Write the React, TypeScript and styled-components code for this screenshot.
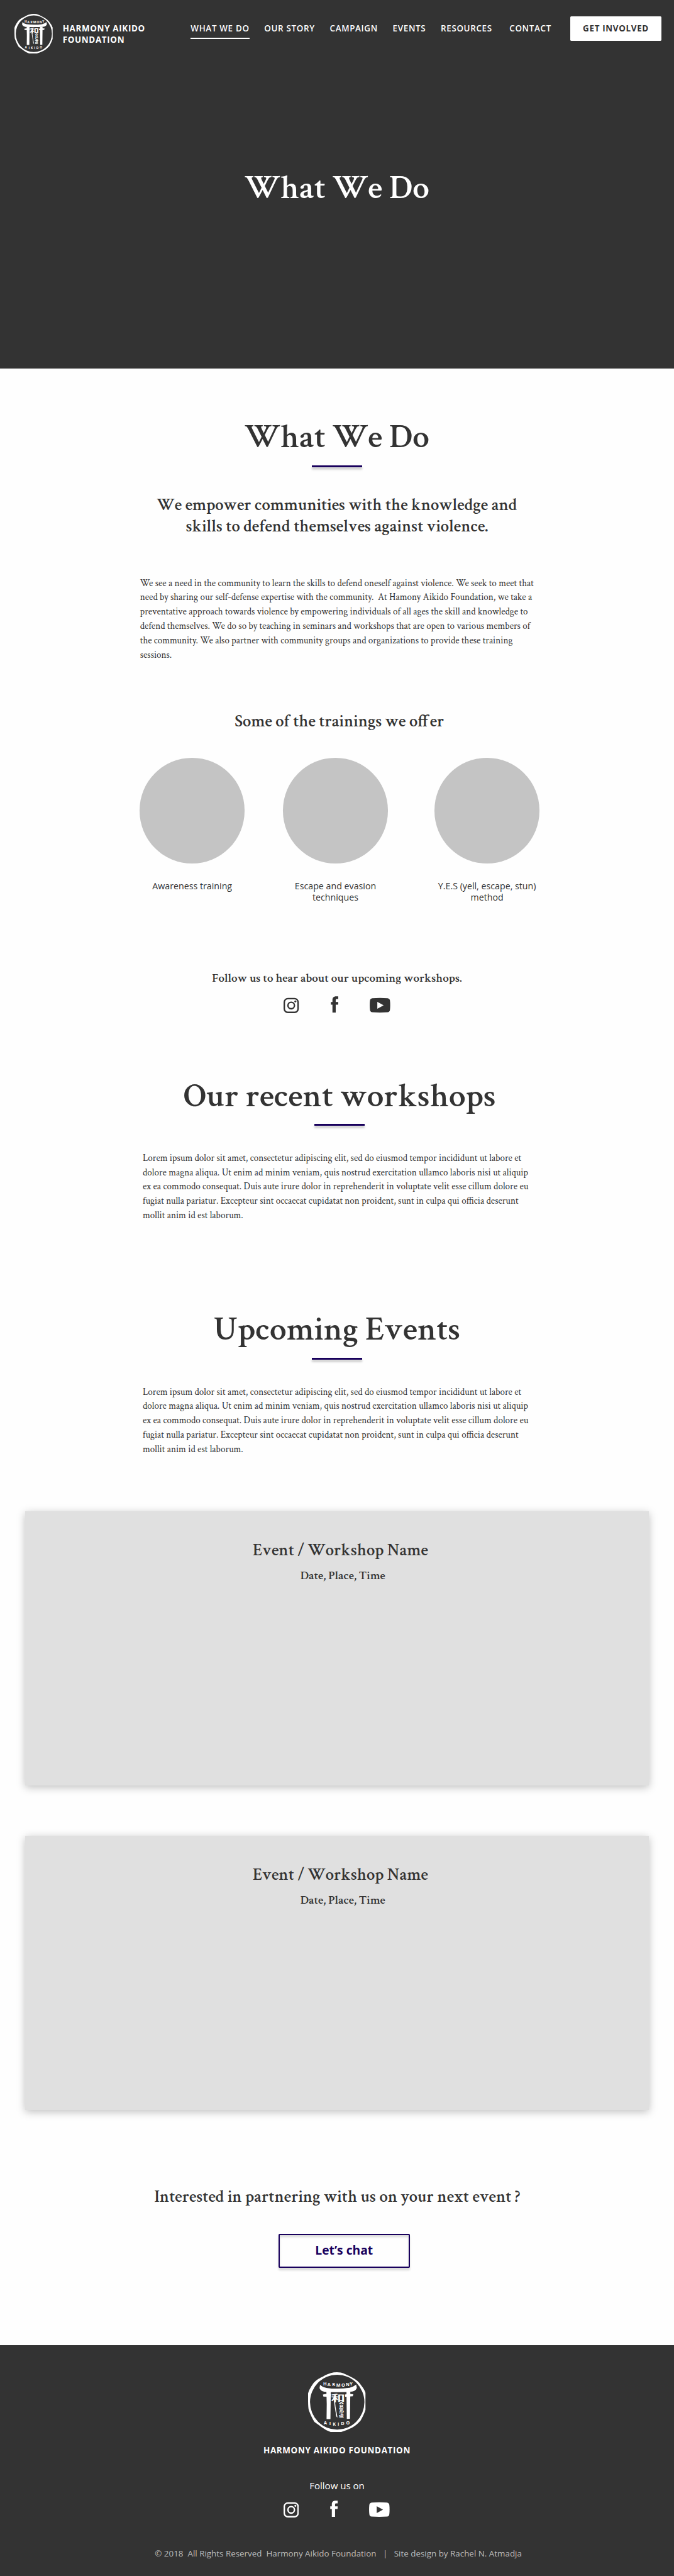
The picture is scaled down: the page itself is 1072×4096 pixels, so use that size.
import React from 'react';
import styled, { createGlobalStyle } from 'styled-components';

/* The design grid is 1280 units wide; the page is laid out at 1072px. */
const u = (n: number) => `${+(n * 0.8375).toFixed(3)}px`;

const ink = '#333333';
const navy = '#18005c';
const serif = '"Crimson Text", "Crimson Pro", "Liberation Serif", serif';
const sans = '"Open Sans", "Noto Sans", sans-serif';

const GlobalStyle = createGlobalStyle`
  *, *::before, *::after { box-sizing: border-box; }
  body { margin: 0; background: #fefefe; color: ${ink}; font-family: ${sans}; }
  h1, h2, h3, p { margin: 0; font-weight: inherit; }
`;

const Page = styled.div`
  display: flex;
  flex-direction: column;
  width: 1072px;
  height: 4096px;
  overflow: hidden;
`;

const Hero = styled.header`
  display: flex;
  flex-direction: column;
  flex: none;
  height: ${u(700)};
  background: ${ink};
  color: #fff;
`;

const TopBar = styled.div`
  display: flex;
  align-items: flex-start;
  height: ${u(120)};
  padding-left: ${u(28)};
`;

const LogoBox = styled.div<{ $w: number; $top: number }>`
  flex: none;
  width: ${(p) => u(p.$w)};
  margin-top: ${(p) => u(p.$top)};
  line-height: 0;
  svg { width: 100%; height: auto; }
`;

const Brand = styled.div`
  width: ${u(243.2)};
  margin: ${u(44.1)} 0 0 ${u(18.5)};
  font-size: ${u(16)};
  line-height: ${u(21)};
  font-weight: 700;
  letter-spacing: 0.05em;
  white-space: pre;
`;

const Nav = styled.nav`
  display: flex;
  gap: ${u(28.3)};
  margin-top: ${u(43)};
`;

const NavLink = styled.a<{ $active?: boolean }>`
  height: ${u(31)};
  border-bottom: ${u(2.4)} solid ${(p) => (p.$active ? '#fff' : 'transparent')};
  font-size: ${u(16)};
  line-height: ${u(21.8)};
  font-weight: 600;
  letter-spacing: 0.05em;
  white-space: nowrap;
  &:last-child { margin-left: ${u(4.5)}; }
`;

const InvolvedButton = styled.button`
  width: ${u(173)};
  height: ${u(47)};
  margin: ${u(31)} 0 0 ${u(36)};
  padding: 0 0 ${u(1)};
  border: 0;
  border-radius: ${u(2)};
  background: #fff;
  color: ${ink};
  font: 700 ${u(16)} / ${u(21.8)} ${sans};
  letter-spacing: 0.05em;
  white-space: nowrap;
`;

const Title = styled.h2<{ $top: number; $shift?: number }>`
  align-self: center;
  margin: ${(p) => u(p.$top)} 0 0 ${(p) => u(p.$shift ?? 0)};
  font: 600 ${u(64)} / ${u(84)} ${serif};
  font-kerning: none;
  white-space: nowrap;
`;

const Rule = styled.div<{ $shift?: number }>`
  flex: none;
  align-self: center;
  width: ${u(96)};
  height: ${u(4)};
  margin: ${u(10.7)} 0 0 ${(p) => u(p.$shift ?? 0)};
  background: ${navy};
  box-shadow: 0 ${u(4)} ${u(4)} rgba(0, 0, 0, 0.25);
`;

const Main = styled.main`
  display: flex;
  flex-direction: column;
  flex: none;
  height: ${u(3752)};
`;

const Subtitle = styled.h3<{ $top: number; $shift?: number; $size?: number; $lh?: number }>`
  align-self: center;
  margin: ${(p) => u(p.$top)} 0 0 ${(p) => u(p.$shift ?? 0)};
  font: 600 ${(p) => u(p.$size ?? 32)} / ${(p) => u(p.$lh ?? 40)} ${serif};
  font-kerning: none;
  text-align: center;
  white-space: pre;
`;

const Copy = styled.p<{ $top: number; $left: number }>`
  margin: ${(p) => u(p.$top)} 0 0 ${(p) => u(p.$left)};
  font: 400 ${u(18)} / ${u(27.2)} ${serif};
  white-space: pre;
`;

const Trainings = styled.div`
  display: flex;
  margin: ${u(49)} 0 0 ${u(265)};
  height: ${u(276)};
`;

const Training = styled.div<{ $gap: number }>`
  display: flex;
  flex-direction: column;
  align-items: center;
  gap: ${u(32.4)};
  width: ${u(200)};
  margin-left: ${(p) => u(p.$gap)};
  font-size: ${u(17)};
  line-height: ${u(21.8)};
  text-align: center;
`;

const Circle = styled.div`
  flex: none;
  width: ${u(200)};
  height: ${u(200)};
  border-radius: 50%;
  background: #c4c4c4;
`;

const SocialRow = styled.div<{ $top: number; $shift?: number }>`
  display: flex;
  align-self: center;
  align-items: flex-start;
  justify-content: space-between;
  width: ${u(202)};
  height: ${u(32)};
  margin: ${(p) => u(p.$top)} 0 0 ${(p) => u(p.$shift ?? 0)};
  svg { flex: none; }
`;

const EventCard = styled.article<{ $top: number }>`
  display: flex;
  flex-direction: column;
  flex: none;
  align-self: center;
  width: ${u(1184)};
  height: ${u(520)};
  margin-top: ${(p) => u(p.$top)};
  background: #e0e0e0;
  box-shadow: 0 ${u(4)} ${u(15)} rgba(0, 0, 0, 0.25);
`;

const ChatButton = styled.button`
  align-self: center;
  width: ${u(249)};
  height: ${u(64)};
  margin: ${u(49.4)} 0 0 ${u(27)};
  padding: 0 0 ${u(4)};
  border: ${u(2.4)} solid ${navy};
  border-radius: ${u(2)};
  background: transparent;
  box-shadow: 0 ${u(4)} ${u(4)} rgba(0, 0, 0, 0.14), inset 0 ${u(4)} ${u(4)} rgba(0, 0, 0, 0.14);
  color: ${navy};
  font: 700 ${u(23)} / ${u(30)} ${sans};
`;

const Footer = styled.footer`
  display: flex;
  flex-direction: column;
  align-items: center;
  flex: 1;
  background: ${ink};
  color: #fff;
`;

const FooterName = styled.div`
  margin-top: ${u(23.5)};
  font-size: ${u(16)};
  line-height: ${u(22)};
  font-weight: 700;
  letter-spacing: 0.05em;
`;

const FollowLabel = styled.div`
  margin-top: ${u(44.7)};
  font-size: ${u(18)};
  line-height: ${u(25)};
`;

const Copyright = styled.div`
  margin: ${u(57.4)} 0 0 ${u(5)};
  color: #bdbdbd;
  font-size: ${u(16)};
  line-height: ${u(22)};
  white-space: pre;
`;

const latin = { fontFamily: '"Open Sans", sans-serif', fontWeight: 700, fontSize: 26 };
const kanji = { fontFamily: '"Noto Sans CJK JP", sans-serif', fontWeight: 700 };

const Logo = () => (
  <svg viewBox="76 70 326 341" fill="#fff">
    <path
      fillRule="evenodd"
      d="M222 71 L240 70 L262 72 Q285 78 322 98 Q362 118 378 145 Q398 170 402 187 L402 283 Q396 305 374 345 Q350 372 325 385 Q295 400 262 410 L206 410 Q180 402 158 385 Q130 365 112 352 Q95 325 80 285 Q75 270 76 190 Q80 170 108 130 Q125 110 160 95 Q190 76 222 71 Z M241 84 A154 156 0 0 0 87 240 A154 156 0 0 0 241 396 A155 156 0 0 0 396 240 A155 156 0 0 0 241 84 Z"
    />
    <path d="M144 141 Q156 153 180 159 Q245 168 312 158 Q336 152 349 140 L353 158 Q348 175 326 180 Q245 186 168 181 Q146 176 141 160 Z" />
    <path d="M180 180 L205 180 L203 336 L181 336 L182 250 Z M294 180 L316 180 L314 334 L296 335 Z" />
    <path d="M160 197 Q184 190 208 196 L205 209 L163 208 Z M285 197 Q310 190 333 195 L330 207 L287 209 Z" />
    <path d="M226 205 Q230 270 243 326 Q235 328 233 300 Q224 250 221 212 Z" />
    <text x="162 186 213 236 265 290 313" y="144 148 150 152 151 149 145" {...latin}>HARMONY</text>
    <text x="165 197 216 244 263 292" y="368 371 372 372 371 368" {...latin}>AIKIDO</text>
    <text x="206" y="233" {...kanji} fontSize={50} textLength={80} lengthAdjust="spacingAndGlyphs">和</text>
    <text x="251 252 251" y="262 293 325" {...kanji} fontSize={28}>合気道</text>
  </svg>
);

const Socials = ({ color, hole, top, shift }: { color: string; hole: string; top: number; shift?: number }) => (
  <SocialRow $top={top} $shift={shift}>
    <svg viewBox="0 0 29 32" width={u(29)} height={u(32)} fill="none" stroke={color}>
      <rect x="1.4" y="4.6" width="26.2" height="26.2" rx="6.8" strokeWidth="2.8" />
      <circle cx="14.5" cy="17.7" r="6.2" strokeWidth="2.8" />
      <circle cx="22.4" cy="10" r="1.8" fill={color} stroke="none" />
    </svg>
    <svg viewBox="0 0 15 32" width={u(15)} height={u(32)} fill={color}>
      <path d="M3.3 31 V16.2 H0.3 V10.9 H3.3 V7.3 C3.3 2.6 5.8 0.2 10.2 0.2 H14.7 V5.5 H11.7 C10 5.5 9.5 6.2 9.5 7.8 V10.9 H14.7 L14.1 16.2 H9.5 V31 Z" />
    </svg>
    <svg viewBox="0 0 39 32" width={u(39)} height={u(32)} fill={color}>
      <path d="M5 4 Q19.5 2.6 34 4 Q38 4.6 38.5 8.5 Q39.4 17 38.5 26 Q38 30 34 30.5 Q19.5 31.6 5 30.5 Q1 30 0.5 26 Q-0.4 17 0.5 8.5 Q1 4.6 5 4 Z" />
      <path d="M14.5 10.6 L26.5 17.2 L14.5 23.8 Z" fill={hole} />
    </svg>
  </SocialRow>
);

const links = ['WHAT WE DO', 'OUR STORY', 'CAMPAIGN', 'EVENTS', 'RESOURCES', 'CONTACT'];

const trainings = [
  { label: 'Awareness training', gap: 0 },
  { label: 'Escape and evasion techniques', gap: 72 },
  { label: 'Y.E.S (yell, escape, stun) method', gap: 88 },
];

const intro = `We see a need in the community to learn the skills to defend oneself against violence. We seek to meet that
need by sharing our self-defense expertise with the community.  At Hamony Aikido Foundation, we take a
preventative approach towards violence by empowering individuals of all ages the skill and knowledge to
defend themselves. We do so by teaching in seminars and workshops that are open to various members of
the community. We also partner with community groups and organizations to provide these training
sessions.`;

const lorem = `Lorem ipsum dolor sit amet, consectetur adipiscing elit, sed do eiusmod tempor incididunt ut labore et
dolore magna aliqua. Ut enim ad minim veniam, quis nostrud exercitation ullamco laboris nisi ut aliquip
ex ea commodo consequat. Duis aute irure dolor in reprehenderit in voluptate velit esse cillum dolore eu
fugiat nulla pariatur. Excepteur sint occaecat cupidatat non proident, sunt in culpa qui officia deserunt
mollit anim id est laborum.`;

const Event = ({ top }: { top: number }) => (
  <EventCard $top={top}>
    <Subtitle $top={54.6} $shift={13}>Event / Workshop Name</Subtitle>
    <Subtitle $top={12.1} $shift={22} $size={23} $lh={30}>Date, Place, Time</Subtitle>
  </EventCard>
);

export default function App() {
  return (
    <Page>
      <GlobalStyle />
      <Hero>
        <TopBar>
          <LogoBox $w={72.5} $top={26}><Logo /></LogoBox>
          <Brand>{'HARMONY AIKIDO\nFOUNDATION'}</Brand>
          <Nav>
            {links.map((label, i) => (
              <NavLink key={label} $active={i === 0}>{label}</NavLink>
            ))}
          </Nav>
          <InvolvedButton>GET INVOLVED</InvolvedButton>
        </TopBar>
        <Title as="h1" $top={195.1}>What We Do</Title>
      </Hero>
      <Main>
        <Title $top={88.6}>What We Do</Title>
        <Rule />
        <Subtitle $top={52} $lh={40.5}>{'We empower communities with the knowledge and\nskills to defend themselves against violence.'}</Subtitle>
        <Copy $top={74.3} $left={266}>{intro}</Copy>
        <Subtitle $top={92.1} $shift={9}>Some of the trainings we offer</Subtitle>
        <Trainings>
          {trainings.map((t) => (
            <Training key={t.label} $gap={t.gap}>
              <Circle />
              {t.label}
            </Training>
          ))}
        </Trainings>
        <Subtitle $top={127.8} $size={23} $lh={30}>Follow us to hear about our upcoming workshops.</Subtitle>
        <Socials color={ink} hole="#fefefe" top={19} />
        <Title $top={115.3} $shift={10}>Our recent workshops</Title>
        <Rule $shift={10} />
        <Copy $top={48.4} $left={271}>{lorem}</Copy>
        <Title $top={160.9}>Upcoming Events</Title>
        <Rule />
        <Copy $top={48.4} $left={271}>{lorem}</Copy>
        <Event top={103.8} />
        <Event top={96} />
        <Subtitle $top={146.2} $shift={1}>Interested in partnering with us on your next event ?</Subtitle>
        <ChatButton>Let’s chat</ChatButton>
      </Main>
      <Footer>
        <LogoBox $w={109} $top={51.3}><Logo /></LogoBox>
        <FooterName>HARMONY AIKIDO FOUNDATION</FooterName>
        <FollowLabel>Follow us on</FollowLabel>
        <Socials color="#fff" hole={ink} top={15.3} shift={-2} />
        <Copyright>{'© 2018  All Rights Reserved  Harmony Aikido Foundation   |   Site design by Rachel N. Atmadja'}</Copyright>
      </Footer>
    </Page>
  );
}
